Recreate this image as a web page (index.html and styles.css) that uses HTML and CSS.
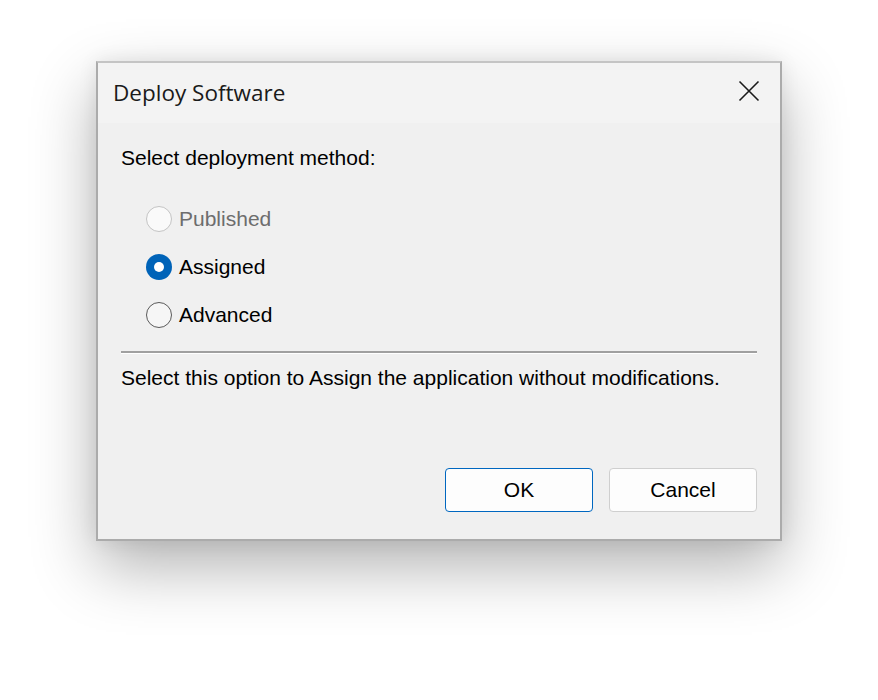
FILE: index.html
```html
<!DOCTYPE html>
<html lang="en">

<head>
    <meta charset="UTF-8">
    <meta name="viewport" content="width=device-width, initial-scale=1.0">
    <title>Deploy Software</title>
    <link rel="stylesheet" href="styles.css">
</head>

<body>

    <div class="dialog">
        <div class="titlebar">
            <span class="title">Deploy Software</span>
            <button class="close" aria-label="Close">
                <svg width="22" height="22" viewBox="0 0 22 22">
                    <path d="M1.5 1.5 L20.5 20.5 M20.5 1.5 L1.5 20.5" stroke="#1a1a1a" stroke-width="1.6" fill="none" />
                </svg>
            </button>
        </div>

        <div class="content">
            <p class="prompt">Select deployment method:</p>

            <div class="options">
                <label class="option disabled">
                    <span class="radio"></span>
                    Published
                </label>
                <label class="option checked">
                    <span class="radio"></span>
                    Assigned
                </label>
                <label class="option">
                    <span class="radio"></span>
                    Advanced
                </label>
            </div>

            <hr class="separator">

            <p class="description">Select this option to Assign the application without modifications.</p>

            <div class="buttons">
                <button class="btn default">OK</button>
                <button class="btn">Cancel</button>
            </div>
        </div>
    </div>

</body>

</html>
```

FILE: styles.css
```css
html,
body {
    margin: 0;
    background: #ffffff;
    min-height: 700px;
}

body {
    padding: 61px 0 0 96px;
    box-sizing: border-box;
    font-family: "Liberation Sans", Arial, sans-serif;
}

.dialog {
    box-sizing: border-box;
    width: 686px;
    height: 480px;
    border: 2px solid #ababab;
    border-top-color: #c4c4c4;
    background: #f0f0f0;
    box-shadow: 0 26px 60px rgba(0, 0, 0, 0.3), 0 0 18px rgba(0, 0, 0, 0.08);
    display: flex;
    flex-direction: column;
}

.titlebar {
    height: 60px;
    background: #f3f3f3;
    display: flex;
    align-items: center;
    justify-content: space-between;
    padding: 0 20px 0 15px;
}

.title {
    font-family: "Open Sans", "Noto Sans", sans-serif;
    font-size: 22.5px;
    color: #1a1a1a;
    margin-top: -2px;
}

.close {
    border: none;
    background: none;
    padding: 0;
    width: 22px;
    height: 22px;
    margin-top: -4px;
}

.content {
    flex: 1;
    padding: 0 23px 0 23px;
    display: flex;
    flex-direction: column;
}

.prompt {
    margin: 23px 0 0;
    font-size: 21px;
    color: #000;
}

.options {
    margin-top: 36px;
    display: flex;
    flex-direction: column;
    gap: 22px;
    padding-left: 25px;
}

.option {
    display: flex;
    align-items: center;
    gap: 7px;
    font-size: 21px;
    color: #000;
    height: 26px;
}

.radio {
    box-sizing: border-box;
    width: 26px;
    height: 26px;
    border-radius: 50%;
    border: 1.5px solid #5a5a5a;
    background: #f6f6f6;
    display: flex;
    align-items: center;
    justify-content: center;
}

.disabled {
    color: #6d6d6d;
}

.disabled .radio {
    border-color: #c4c4c4;
    background: #fafafa;
}

.checked .radio {
    border: none;
    background: #0063b8;
}

.checked .radio::after {
    content: "";
    width: 10px;
    height: 10px;
    border-radius: 50%;
    background: #ffffff;
}

.separator {
    margin: 23px 0 0;
    border: none;
    border-top: 2px solid #a0a0a0;
    border-bottom: 1px solid #ffffff;
}

.description {
    margin: 12px 0 0;
    font-size: 21px;
    color: #000;
}

.buttons {
    margin-top: auto;
    margin-bottom: 27px;
    display: flex;
    justify-content: flex-end;
    gap: 16px;
}

.btn {
    box-sizing: border-box;
    width: 148px;
    height: 44px;
    border: 1px solid #cfcfcf;
    border-radius: 4px;
    background: #fdfdfd;
    font-family: "Liberation Sans", Arial, sans-serif;
    font-size: 21px;
    color: #000;
}

.btn.default {
    border-color: #0067c0;
}
```
